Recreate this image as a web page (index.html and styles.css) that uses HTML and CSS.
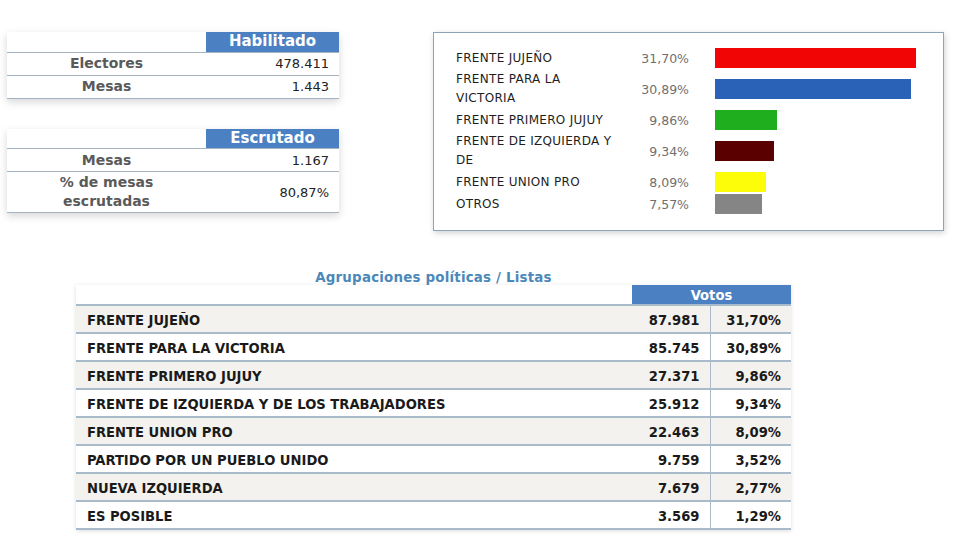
FILE: index.html
```html
<!DOCTYPE html>
<html lang="es">
<head>
<meta charset="utf-8">
<title>Resultados</title>
<link rel="stylesheet" href="styles.css">
</head>
<body>
<div class="page">
  <div class="top">
    <div class="left">
      <table class="sum">
        <tr class="hd"><td class="blank"></td><th>Habilitado</th></tr>
        <tr><td class="lbl">Electores</td><td class="val">478.411</td></tr>
        <tr><td class="lbl">Mesas</td><td class="val">1.443</td></tr>
      </table>
      <table class="sum second">
        <tr class="hd"><td class="blank"></td><th>Escrutado</th></tr>
        <tr><td class="lbl">Mesas</td><td class="val">1.167</td></tr>
        <tr><td class="lbl">% de mesas<br>escrutadas</td><td class="val">80,87%</td></tr>
      </table>
    </div>
    <div class="chart">
      <div class="crow"><span class="cl">FRENTE JUJEÑO</span><span class="cp">31,70%</span><span class="bar red" style="width:201px"></span></div>
      <div class="crow"><span class="cl">FRENTE PARA LA VICTORIA</span><span class="cp">30,89%</span><span class="bar blue" style="width:196px"></span></div>
      <div class="crow"><span class="cl">FRENTE PRIMERO JUJUY</span><span class="cp">9,86%</span><span class="bar green" style="width:62px"></span></div>
      <div class="crow"><span class="cl">FRENTE DE IZQUIERDA Y DE</span><span class="cp">9,34%</span><span class="bar maroon" style="width:59px"></span></div>
      <div class="crow"><span class="cl">FRENTE UNION PRO</span><span class="cp">8,09%</span><span class="bar yellow" style="width:51px"></span></div>
      <div class="crow"><span class="cl">OTROS</span><span class="cp">7,57%</span><span class="bar gray" style="width:47px"></span></div>
    </div>
  </div>
  <div class="bottom">
    <div class="title">Agrupaciones políticas / Listas</div>
    <table class="votes">
      <tr class="hd"><td class="blank"></td><th colspan="2">Votos</th></tr>
      <tr class="alt"><td class="name">FRENTE JUJEÑO</td><td class="num">87.981</td><td class="pct">31,70%</td></tr>
      <tr><td class="name">FRENTE PARA LA VICTORIA</td><td class="num">85.745</td><td class="pct">30,89%</td></tr>
      <tr class="alt"><td class="name">FRENTE PRIMERO JUJUY</td><td class="num">27.371</td><td class="pct">9,86%</td></tr>
      <tr><td class="name">FRENTE DE IZQUIERDA Y DE LOS TRABAJADORES</td><td class="num">25.912</td><td class="pct">9,34%</td></tr>
      <tr class="alt"><td class="name">FRENTE UNION PRO</td><td class="num">22.463</td><td class="pct">8,09%</td></tr>
      <tr><td class="name">PARTIDO POR UN PUEBLO UNIDO</td><td class="num">9.759</td><td class="pct">3,52%</td></tr>
      <tr class="alt"><td class="name">NUEVA IZQUIERDA</td><td class="num">7.679</td><td class="pct">2,77%</td></tr>
      <tr><td class="name">ES POSIBLE</td><td class="num">3.569</td><td class="pct">1,29%</td></tr>
    </table>
  </div>
</div>
</body>
</html>
```
FILE: styles.css
```css
* { box-sizing: border-box; }
html, body { margin: 0; padding: 0; background: #fff; }
body { font-family: "DejaVu Sans", Verdana, sans-serif; color: #222; }
.page { width: 970px; height: 546px; overflow: hidden; }

.top { display: flex; align-items: flex-start; padding-top: 32px; }
.left { margin-left: 7px; width: 332px; }

table { border-collapse: collapse; }
.sum { width: 332px; box-shadow: 0 3px 8px rgba(0,0,0,0.16); background: #fff; }
.sum.second { margin-top: 30px; }
.sum .hd th {
  background: #4b80c2; color: #fff; font-size: 15px; font-weight: bold;
  height: 20px; padding: 0; width: 133px; text-align: center; line-height: 19px;
}
.sum .blank { background: #fff; width: 199px; padding: 0; }
.sum td.lbl, .sum td.val { border-top: 1px solid #a3b3c3; height: 23px; }
.sum tr:last-child td { border-bottom: 1px solid #a3b3c3; }
.sum .lbl { text-align: center; font-weight: bold; font-size: 14px; color: #5a5a5a; line-height: 19px; padding: 1px 0; }
.sum .val { text-align: right; font-size: 13px; color: #222; padding: 0 10px 0 0; }

.chart {
  margin-left: 94px; width: 511px; height: 199px;
  border: 1px solid #8ea3b7; background: #fff;
  box-shadow: 1px 2px 6px rgba(0,0,0,0.18);
  padding: 14px 0 0 22px;
}
.crow { display: flex; align-items: center; min-height: 22px; padding: 1px 0; }
.cl { width: 165px; font-size: 12px; line-height: 19px; color: #1e1e1e; letter-spacing: 0.3px; }
.cp { width: 68px; text-align: right; font-size: 12.5px; color: #707070; }
.bar { display: block; height: 20px; margin-left: 26px; }
.red { background: #f20505; }
.blue { background: #2a62b8; }
.green { background: #1eae1e; }
.maroon { background: #5a0000; }
.yellow { background: #fdfd09; }
.gray { background: #858585; }

.bottom { margin: 38px 0 0 76px; width: 715px; }
.title {
  text-align: center; font-family: "DejaVu Sans Condensed", "DejaVu Sans", sans-serif;
  font-weight: bold; font-size: 14.9px; color: #4c88b9; line-height: 16px; letter-spacing: 0.2px;
}
.votes { width: 715px; box-shadow: 0 1px 4px rgba(0,0,0,0.14); background: #fff;
  font-family: "DejaVu Sans Condensed", "DejaVu Sans", sans-serif; }
.votes .hd th {
  background: #4b80c2; color: #fff; font-size: 14.6px; font-weight: bold;
  height: 19px; padding: 0; text-align: center; line-height: 19px;
}
.votes .hd .blank { padding: 0; background: #fff; }
.votes td.name, .votes td.num, .votes td.pct {
  border-top: 2px solid #a9bbcb; height: 28px; font-weight: bold; font-size: 14.6px; color: #1a1a1a;
}
.votes tr:last-child td { border-bottom: 2px solid #a9bbcb; }
.votes tr.alt td { background: #f4f2ee; }
.votes .name { padding: 0 0 0 11px; }
.votes .num { width: 78px; text-align: right; padding: 0 10px 0 0; border-right: 1px solid #a9bbcb; }
.votes .pct { width: 81px; text-align: right; padding: 0 10px 0 0; }
```
